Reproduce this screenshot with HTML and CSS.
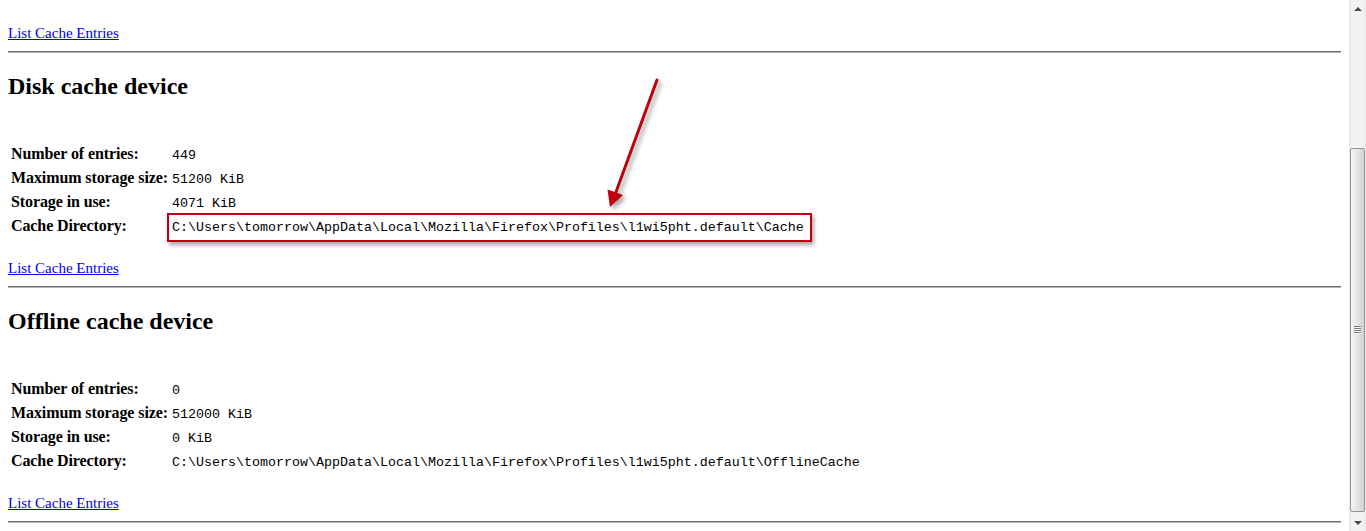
FILE: index.html
```html
<!DOCTYPE html>
<html lang="en">
<head>
    <meta charset="UTF-8">
    <title>Information about the Cache Service</title>
    <link rel="stylesheet" href="styles.css">
</head>
<body>
    <div class="window">
        <main class="page">
            <p class="entries"><a href="#">List Cache Entries</a></p>
            <hr>

            <section class="device">
                <h2>Disk cache device</h2>
                <table class="stats">
                    <tr><th>Number of entries:</th><td><tt>449</tt></td></tr>
                    <tr><th>Maximum storage size:</th><td><tt>51200 KiB</tt></td></tr>
                    <tr><th>Storage in use:</th><td><tt>4071 KiB</tt></td></tr>
                    <tr><th>Cache Directory:</th><td><tt class="mark">C:\Users\tomorrow\AppData\Local\Mozilla\Firefox\Profiles\l1wi5pht.default\Cache</tt></td></tr>
                </table>
                <p class="entries"><a href="#">List Cache Entries</a></p>
            </section>
            <hr>

            <section class="device">
                <h2>Offline cache device</h2>
                <table class="stats">
                    <tr><th>Number of entries:</th><td><tt>0</tt></td></tr>
                    <tr><th>Maximum storage size:</th><td><tt>512000 KiB</tt></td></tr>
                    <tr><th>Storage in use:</th><td><tt>0 KiB</tt></td></tr>
                    <tr><th>Cache Directory:</th><td><tt>C:\Users\tomorrow\AppData\Local\Mozilla\Firefox\Profiles\l1wi5pht.default\OfflineCache</tt></td></tr>
                </table>
                <p class="entries"><a href="#">List Cache Entries</a></p>
            </section>
            <hr>

            <!-- annotation arrow -->
            <svg class="arrow" width="100" height="150" viewBox="590 70 100 150">
                <defs>
                    <filter id="soft" x="-50%" y="-20%" width="200%" height="140%">
                        <feDropShadow dx="3" dy="3" stdDeviation="2" flood-color="#000" flood-opacity="0.35"/>
                    </filter>
                </defs>
                <g filter="url(#soft)">
                    <line x1="657" y1="80" x2="616" y2="192" stroke="#c0000f" stroke-width="3" stroke-linecap="round"/>
                    <polygon points="610,207 607.5,189.5 623,195" fill="#c0000f"/>
                </g>
            </svg>
        </main>

        <div class="scrollbar">
            <div class="scroll-btn"><span class="tri-up"></span></div>
            <div class="track">
                <div class="thumb"><span class="grip"></span></div>
            </div>
            <div class="scroll-btn"><span class="tri-down"></span></div>
        </div>
    </div>
</body>
</html>
```

FILE: styles.css
```css
/* reset */
* {
    box-sizing: border-box;
}

html, body {
    margin: 0;
    height: 100%;
    overflow: hidden;
}

body {
    background: #fff;
    color: #000;
    font-family: "Liberation Serif", "Times New Roman", serif;
    font-size: 16px;
}

/* window: page + scrollbar */
.window {
    display: flex;
    height: 531px;
}

.page {
    position: relative;
    flex: 1;
    padding: 24px 8px 0;
    overflow: hidden;
}

a {
    color: #0000ee;
}

.entries {
    margin: 0;
    font-size: 15px;
    line-height: 19px;
}

hr {
    margin: 8px 0 0;
    height: 2px;
    border: 0;
    border-top: 1px solid #6e6e6e;
    border-bottom: 1px solid #b4b4b4;
}

/* device blocks */
.device h2 {
    margin: 19px 0 0;
    font-size: 24px;
    line-height: 28px;
    font-weight: bold;
}

.stats {
    margin-top: 41px;
    margin-bottom: -2px;
    border-spacing: 2px;
}

.stats th,
.stats td {
    height: 22px;
    padding: 2px 1px;
    line-height: 18px;
    text-align: left;
    white-space: nowrap;
}

.stats th {
    letter-spacing: -0.1px;
}

.stats tt {
    font-family: "Liberation Mono", "Courier New", monospace;
    font-size: 13.33px;
    line-height: 14px;
}

.device .entries {
    margin-top: 22px;
}

/* red frame round the cache path */
.mark {
    position: relative;
}

.mark::after {
    content: "";
    position: absolute;
    left: -5px;
    right: -8px;
    top: -7px;
    bottom: -7px;
    border: 2px solid #c0000f;
    box-shadow: 2px 3px 4px rgba(0, 0, 0, 0.35);
}

.arrow {
    position: absolute;
    left: 590px;
    top: 70px;
}

/* scrollbar */
.scrollbar {
    width: 17px;
    display: flex;
    flex-direction: column;
    background: linear-gradient(to right, #e6e6e6, #f2f2f2 3px, #f2f2f2 14px, #e9e9e9);
}

.scroll-btn {
    height: 17px;
    display: flex;
    justify-content: center;
    align-items: center;
}

.tri-up,
.tri-down {
    width: 0;
    height: 0;
    border-left: 4px solid transparent;
    border-right: 4px solid transparent;
}

.tri-up {
    border-bottom: 4px solid #4a4a4a;
}

.tri-down {
    border-top: 4px solid #4a4a4a;
}

.track {
    flex: 1;
    display: flex;
    flex-direction: column;
    padding: 131px 1px 2px;
}

.thumb {
    flex: 1;
    display: flex;
    justify-content: center;
    align-items: center;
    border: 1px solid #959595;
    border-radius: 2px;
    background: linear-gradient(to right, #f4f4f4, #e4e4e4 50%, #d2d2d2);
}

.grip {
    width: 7px;
    height: 8px;
    background: repeating-linear-gradient(to bottom, #7c7c7c 0, #7c7c7c 1px, #f4f4f4 1px, #f4f4f4 2px);
}
```
